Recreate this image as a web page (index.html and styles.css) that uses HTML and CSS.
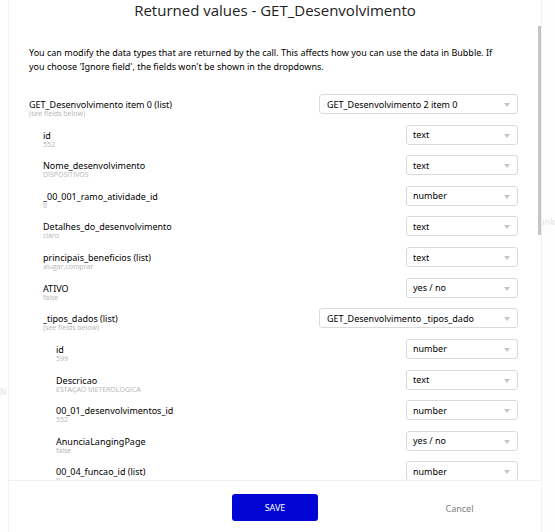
FILE: index.html
```html
<!DOCTYPE html>
<html lang="en">
<head>
<meta charset="utf-8">
<title>Returned values</title>
<link rel="stylesheet" href="styles.css">
</head>
<body>
<span class="ghost ghost-left">AN</span>
<span class="ghost ghost-right">ank</span>
<main class="modal">
  <h1 class="title">Returned values - GET_Desenvolvimento</h1>
  <div class="content">
    <p class="intro">You can modify the data types that are returned by the call. This affects how you can use the data in Bubble. If you choose 'Ignore field', the fields won't be shown in the dropdowns.</p>
    <div class="fields">
      <div class="row"><label for="f0">GET_Desenvolvimento item 0 (list)<small>(see fields below)</small></label><span class="pick wide"><select id="f0"><option>GET_Desenvolvimento 2 item 0</option></select></span></div>
      <div class="row in1"><label for="f1">id<small>552</small></label><span class="pick"><select id="f1"><option>text</option></select></span></div>
      <div class="row in1"><label for="f2">Nome_desenvolvimento<small>DISPOSITIVOS</small></label><span class="pick"><select id="f2"><option>text</option></select></span></div>
      <div class="row in1"><label for="f3">_00_001_ramo_atividade_id<small>0</small></label><span class="pick"><select id="f3"><option>number</option></select></span></div>
      <div class="row in1"><label for="f4">Detalhes_do_desenvolvimento<small>claro</small></label><span class="pick"><select id="f4"><option>text</option></select></span></div>
      <div class="row in1"><label for="f5">principais_beneficios (list)<small>alugar,comprar</small></label><span class="pick"><select id="f5"><option>text</option></select></span></div>
      <div class="row in1"><label for="f6">ATIVO<small>false</small></label><span class="pick"><select id="f6"><option>yes / no</option></select></span></div>
      <div class="row in1"><label for="f7">_tipos_dados (list)<small>(see fields below)</small></label><span class="pick wide"><select id="f7"><option>GET_Desenvolvimento _tipos_dado</option></select></span></div>
      <div class="row in2"><label for="f8">id<small>599</small></label><span class="pick"><select id="f8"><option>number</option></select></span></div>
      <div class="row in2"><label for="f9">Descricao<small>ESTAÇAO METEROLOGICA</small></label><span class="pick"><select id="f9"><option>text</option></select></span></div>
      <div class="row in2"><label for="f10">00_01_desenvolvimentos_id<small>552</small></label><span class="pick"><select id="f10"><option>number</option></select></span></div>
      <div class="row in2"><label for="f11">AnunciaLangingPage<small>false</small></label><span class="pick"><select id="f11"><option>yes / no</option></select></span></div>
      <div class="row in2"><label for="f12">00_04_funcao_id (list)<small>0</small></label><span class="pick"><select id="f12"><option>number</option></select></span></div>
    </div>
    <div class="thumb"></div>
  </div>
  <footer class="actions">
    <button class="save" type="button">SAVE</button>
    <button class="cancel" type="button">Cancel</button>
  </footer>
</main>
</body>
</html>
```
FILE: styles.css
```css
* {
  box-sizing: border-box;
}

body {
  margin: 0;
  padding: 0 13px 0 8px;
  height: 100vh;
  overflow: hidden;
  background: #fefefe;
  color: #000;
  font-family: "Noto Sans", "Open Sans", sans-serif;
  font-size: 9px;
}

.modal {
  position: relative;
  display: flex;
  flex-direction: column;
  height: 100%;
  background: #fff;
  border: solid #f1f1f1;
  border-width: 0 1px;
}

.ghost {
  position: absolute;
  color: #e4e4e4;
  line-height: 12px;
}

.ghost-left {
  left: -6px;
  top: 386px;
  color: #dde4f4;
}

.ghost-right {
  right: 0;
  top: 216px;
  z-index: 1;
  width: 13px;
  direction: rtl;
  overflow: hidden;
}

.title {
  margin: 0;
  height: 26px;
  font-family: "Open Sans", sans-serif;
  font-size: 15px;
  font-weight: 400;
  line-height: 20px;
  text-align: center;
  color: #222;
}

.content {
  position: relative;
  flex: 1;
  min-height: 0;
  overflow: hidden;
  padding: 20px 23px 0 20px;
}

.intro {
  margin: 0;
  padding-right: 10px;
  line-height: 14px;
}

.fields {
  display: grid;
  grid-auto-rows: 1fr;
  height: 398px;
  margin-top: 20px;
}

.row {
  display: flex;
  justify-content: space-between;
  align-items: flex-start;
}

.in1 {
  padding-left: 14px;
}

.in2 {
  padding-left: 27px;
}

label {
  padding-top: 5px;
  line-height: 11px;
}

small {
  display: block;
  font-family: "Open Sans", sans-serif;
  font-size: 7px;
  line-height: 7px;
  color: #b4b4b4;
}

.pick {
  position: relative;
  flex: none;
  width: 112px;
}

.wide {
  width: 199px;
}

.pick::after {
  content: "";
  position: absolute;
  right: 8px;
  top: 9px;
  border: 3px solid transparent;
  border-top: 4px solid #bfc8cf;
  border-bottom: 0;
  pointer-events: none;
}

select {
  display: block;
  appearance: none;
  width: 100%;
  height: 20px;
  padding: 0 16px 0 6px;
  border: 1px solid #dadada;
  border-radius: 3px;
  background: #fff;
  color: #000;
  font: inherit;
}

.wide select {
  padding-left: 7px;
}

.thumb {
  position: absolute;
  top: 0;
  right: 0;
  width: 3px;
  height: 46%;
  background: #c4c4c4;
}

.actions {
  display: grid;
  grid-template-columns: 1fr 86px 1fr;
  align-items: center;
  height: 52px;
  padding-top: 2px;
  border-top: 1px solid #f1f1f1;
}

button {
  border: 0;
  font: inherit;
}

.save {
  grid-column: 2;
  height: 27px;
  border-radius: 3px;
  background: #0205d3;
  color: #fff;
}

.cancel {
  justify-self: center;
  padding: 2px 0 0 60px;
  background: none;
  color: #808080;
}
```
